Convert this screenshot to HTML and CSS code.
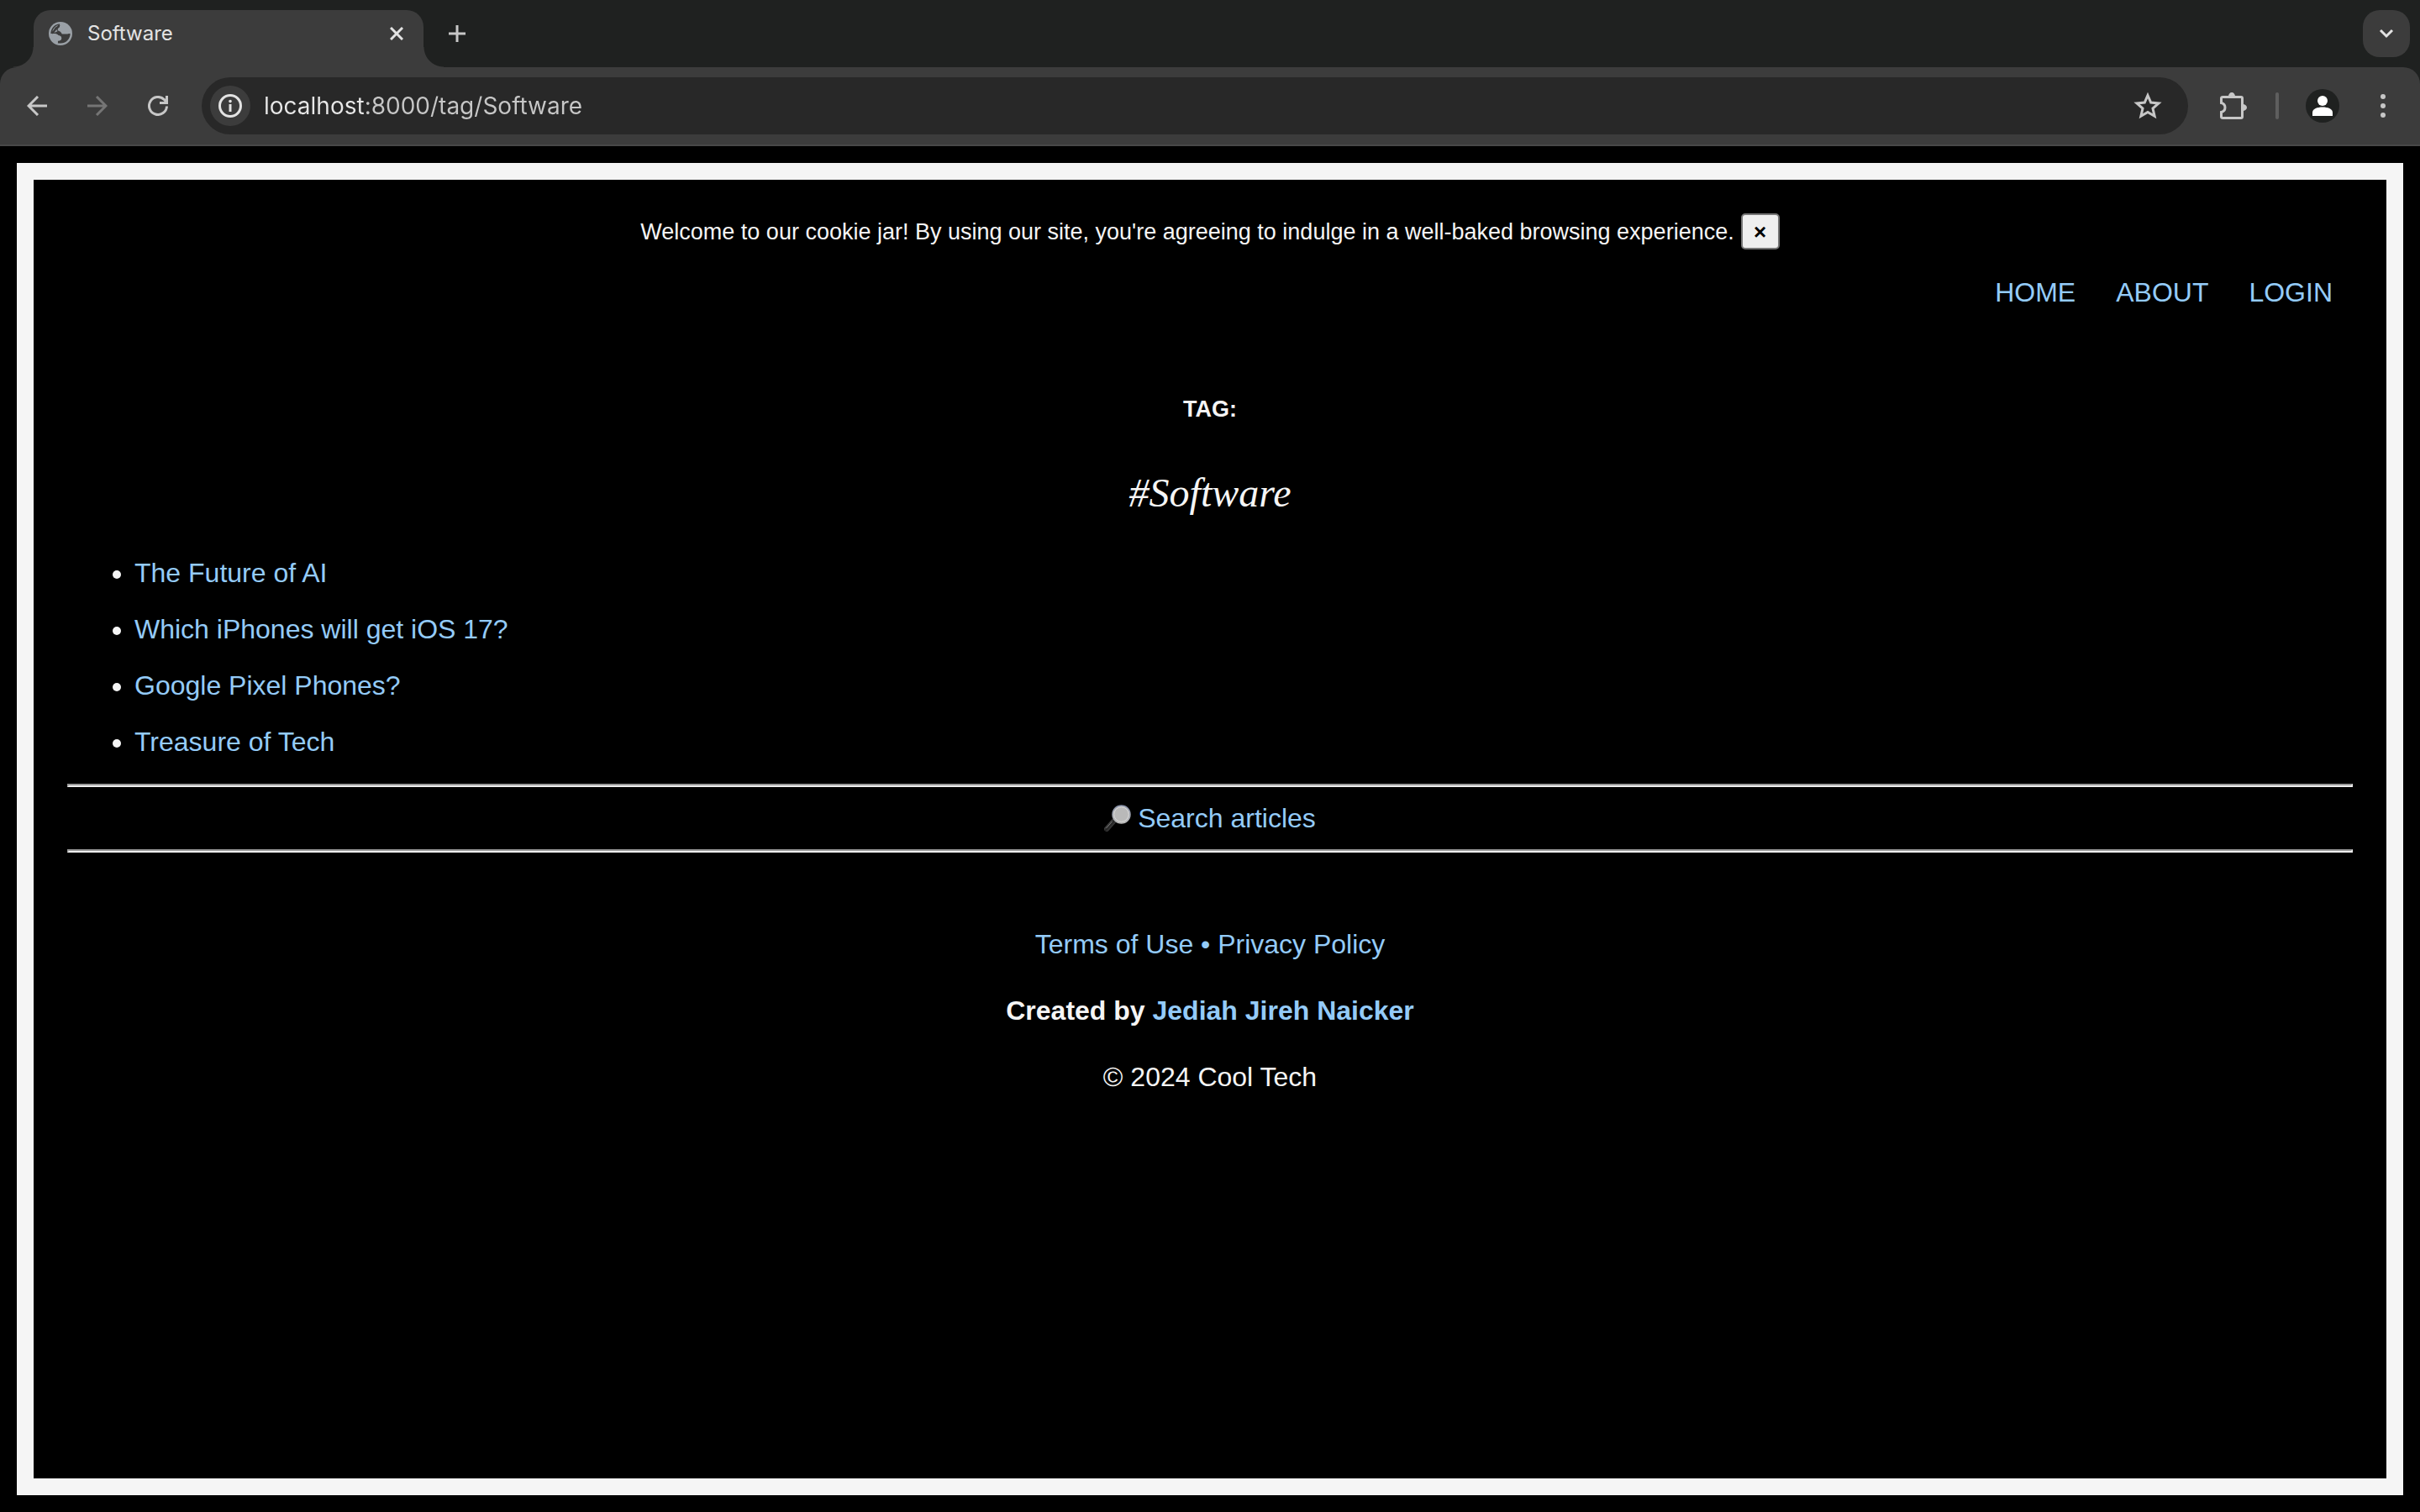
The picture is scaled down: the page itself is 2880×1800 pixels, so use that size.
FILE: index.html
```html
<!DOCTYPE html>
<html lang="en">
<head>
<meta charset="utf-8">
<title>Software</title>
<link rel="stylesheet" href="styles.css">
</head>
<body>
<header class="browser">
  <div class="tabstrip">
    <div class="tab">
      <svg class="favicon" viewBox="0 0 28 28" aria-hidden="true">
        <circle cx="14" cy="14" r="14" fill="#9aa0a6"/>
        <path d="M13 2.400C13.800 5.400 12.600 6.600 10.800 7.600V10.200C13.200 11.200 14.800 12 15.800 14.400H20.600C22.800 14.600 23.600 13.800 25.600 14C25.600 20.600 20.400 25.600 14 25.600H10.800V22.600C13.600 22.600 15.200 21.600 15.200 19.600C15.200 17.600 13.600 16.400 11.600 16.200C10.800 14.800 9 13.900 2.400 14C2.400 7.600 7 2.700 13 2.400Z" fill="#3c3c3c"/>
        <path d="M2.400 14.200C5.400 13.800 9 14 11.400 16.200C14.400 16.400 15.400 18 15.200 19.800C15 21.800 13.400 22.600 10.800 22.600V25.400C5.600 24 2.400 19.600 2.400 14.200Z" fill="#9aa0a6"/>
        <path d="M4 12.600C5 8 8 4.600 12.200 3.400C12.600 5 11.400 6 9.600 7C8.800 9 9.400 10.200 10.600 11L8 12.600Z" fill="#9aa0a6"/>
        <path d="M11.400 3.600C13 5.600 10 6.800 8.600 7.600C7.800 9.800 6.200 11.400 3.600 13.600" fill="none" stroke="#3c3c3c" stroke-width="2.600"/>
      </svg>
      <span class="tab-title">Software</span>
      <button class="icon-button tab-close" aria-label="Close tab">
        <svg width="16" height="16" viewBox="0 0 16 16"><path d="M1 1L15 15M15 1L1 15" stroke="#e3e3e3" stroke-width="3" fill="none"/></svg>
      </button>
    </div>
    <button class="icon-button new-tab" aria-label="New tab">
      <svg width="20" height="20" viewBox="0 0 20 20"><path d="M10 0V20M0 10H20" stroke="#c7c7c7" stroke-width="3" fill="none"/></svg>
    </button>
    <button class="icon-button tab-search" aria-label="Search tabs">
      <svg width="18" height="12" viewBox="0 0 18 12"><path d="M2 2L9 9L16 2" stroke="#e3e3e3" stroke-width="3" fill="none"/></svg>
    </button>
  </div>
  <div class="toolbar">
    <div class="history">
      <button class="icon-button" aria-label="Back"><svg width="24" height="24" viewBox="0 0 24 24"><path d="M24 12H2M13 1L2 12L13 23" stroke="#c7c7c7" stroke-width="3" fill="none"/></svg></button>
      <button class="icon-button" aria-label="Forward" disabled><svg width="24" height="24" viewBox="0 0 24 24"><path d="M0 12H22M11 1L22 12L11 23" stroke="#757575" stroke-width="3" fill="none"/></svg></button>
      <button class="icon-button" aria-label="Reload"><svg width="24" height="24" viewBox="0 0 24 24"><path d="M22.500 12.500A10.500 10.500 0 1 1 19.500 4.600L22 7.500M22.500 0V8.500H14" stroke="#c7c7c7" stroke-width="3" fill="none"/></svg></button>
    </div>
    <div class="omnibox">
      <button class="icon-button site-info" aria-label="View site information">
        <svg width="28" height="28" viewBox="0 0 28 28"><circle cx="14" cy="14" r="12.500" stroke="#e3e3e3" stroke-width="3" fill="none"/><path d="M14 12V21" stroke="#e3e3e3" stroke-width="3"/><circle cx="14" cy="8.600" r="1.800" fill="#e3e3e3"/></svg>
      </button>
      <input class="address" type="text" aria-label="Address" value="localhost:8000/tag/Software">
      <button class="icon-button star" aria-label="Bookmark this page">
        <svg width="34" height="32" viewBox="0 0 34 32"><path d="M17 3.500L20.700 12.100L30 12.900L23 19.100L25.100 28.300L17 23.500L8.900 28.300L11 19.100L4 12.900L13.300 12.100Z" stroke="#c7c7c7" stroke-width="3" fill="none"/></svg>
      </button>
    </div>
    <div class="actions">
      <button class="icon-button" aria-label="Extensions">
        <svg width="32" height="32" viewBox="0 0 32 32"><path d="M3.500 5.500H25Q26.500 5.500 26.500 7V29Q26.500 30.500 25 30.500H3.500Q1.500 30.500 1.500 29V23.500C7.500 22 7.500 14 1.500 12.500V7Q1.500 5.500 3.500 5.500Z" stroke="#c7c7c7" stroke-width="3" fill="none"/><path d="M10 5A4 5 0 0 1 18 5ZM27 14A5 4 0 0 1 27 22Z" fill="#c7c7c7"/></svg>
      </button>
      <span class="separator"></span>
      <button class="icon-button" aria-label="Profile">
        <svg width="40" height="40" viewBox="0 0 40 40"><circle cx="20" cy="20" r="20" fill="#1f2120"/><circle cx="20" cy="14" r="6" fill="#fff"/><path d="M8 32V28C8 23.500 14 21.500 20 21.500S32 23.500 32 28V32Z" fill="#fff"/></svg>
      </button>
      <button class="icon-button" aria-label="Menu">
        <svg width="8" height="28" viewBox="0 0 8 28"><g fill="#c7c7c7"><circle cx="4" cy="3" r="3"/><circle cx="4" cy="14" r="3"/><circle cx="4" cy="25" r="3"/></g></svg>
      </button>
    </div>
  </div>
</header>
<div class="page">
  <div class="cookie">
    <span>Welcome to our cookie jar! By using our site, you're agreeing to indulge in a well-baked browsing experience.</span>
    <button class="dismiss" aria-label="Dismiss">×</button>
  </div>
  <nav class="nav">
    <a href="#home">HOME</a>
    <a href="#about">ABOUT</a>
    <a href="#login">LOGIN</a>
  </nav>
  <main>
    <h5 class="label">TAG:</h5>
    <h1 class="tag">#Software</h1>
    <ul class="articles">
      <li><a href="#ai">The Future of AI</a></li>
      <li><a href="#ios">Which iPhones will get iOS 17?</a></li>
      <li><a href="#pixel">Google Pixel Phones?</a></li>
      <li><a href="#treasure">Treasure of Tech</a></li>
    </ul>
  </main>
  <hr class="rule">
  <a class="search" href="#search">
    <svg width="32" height="32" viewBox="0 0 32 32" aria-hidden="true">
      <defs>
        <linearGradient id="rim" x1="0" y1="0" x2="0" y2="1"><stop offset="0" stop-color="#8790a8"/><stop offset="1" stop-color="#b8b8b8"/></linearGradient>
        <linearGradient id="grip" x1="0" y1="0" x2="1" y2="1"><stop offset="0" stop-color="#666"/><stop offset=".5" stop-color="#222"/><stop offset="1" stop-color="#555"/></linearGradient>
      </defs>
      <path d="M14 17L10 21" stroke="#999" stroke-width="2"/>
      <path d="M11 20L3 29" stroke="url(#grip)" stroke-width="6" stroke-linecap="round"/>
      <path d="M9.500 20L2.500 28" stroke="#777" stroke-width="1"/>
      <circle cx="20.500" cy="11.500" r="10.500" fill="#bdbdbd" stroke="url(#rim)" stroke-width="1.500"/>
      <circle cx="20.500" cy="11.500" r="8.800" fill="#b9b9b9" stroke="#d8d8d8" stroke-width="1"/>
    </svg>
    <span>Search articles</span>
  </a>
  <hr class="rule">
  <footer class="footer">
    <p><a href="#terms">Terms of Use</a><a href="#privacy"> • Privacy Policy</a></p>
    <p class="author">Created by <a href="#author">Jediah Jireh Naicker</a></p>
    <p>© 2024 Cool Tech</p>
  </footer>
</div>
</body>
</html>
```
FILE: styles.css
```css
* { box-sizing: border-box; }

body {
  margin: 0;
  min-height: 100vh;
  display: flex;
  flex-direction: column;
  background: #000;
  color: #f5f5f5;
  font: 32px/38px "Liberation Sans", Arial, sans-serif;
}

a { color: #94cbf8; text-decoration: none; }
svg { display: block; flex: none; }

/* Browser chrome */
.browser { background: #1f2120; font-family: Inter, sans-serif; }

.icon-button {
  display: flex;
  align-items: center;
  justify-content: center;
  padding: 0;
  border: 0;
  background: none;
}

.tabstrip {
  display: flex;
  align-items: center;
  height: 80px;
  padding: 0 12px 0 40px;
}

.tab {
  position: relative;
  display: flex;
  align-items: center;
  width: 464px;
  height: 68px;
  margin-top: 12px;
  padding: 0 24px 12px 18px;
  border-radius: 20px 20px 0 0;
  background: #3c3c3c;
}

.tab::before,
.tab::after {
  content: "";
  position: absolute;
  bottom: 0;
  width: 24px;
  height: 24px;
}
.tab::before { right: 100%; background: radial-gradient(circle at 0 0, transparent 23px, #3c3c3c 24px); }
.tab::after { left: 100%; background: radial-gradient(circle at 100% 0, transparent 23px, #3c3c3c 24px); }

.favicon { width: 28px; height: 28px; }
.tab-title { flex: 1; margin-left: 18px; color: #e3e3e3; font-size: 24px; line-height: 32px; }
.new-tab { margin-left: 30px; }
.tab-search {
  width: 56px;
  height: 56px;
  margin-left: auto;
  border-radius: 20px;
  background: #3c3c3c;
}

.toolbar {
  display: flex;
  align-items: center;
  height: 94px;
  padding: 0 40px 0 32px;
  border-bottom: 2px solid #484848;
  border-radius: 20px 20px 0 0;
  background: #3c3c3c;
}

.history { display: flex; gap: 48px; margin-right: 40px; }

.omnibox {
  flex: 1;
  display: flex;
  align-items: center;
  height: 68px;
  padding: 0 31px 0 10px;
  border-radius: 34px;
  background: #282828;
}

.site-info { width: 48px; height: 48px; border-radius: 50%; background: #3c3c3c; }

.address {
  flex: 1;
  margin: 0 16px;
  padding: 0;
  border: 0;
  outline: 0;
  background: linear-gradient(90deg, #e8e8e8 120px, #c7c7c7 120px);
  background-clip: text;
  -webkit-background-clip: text;
  color: transparent;
  font: 28px/40px Inter, sans-serif;
}

.actions { display: flex; align-items: center; gap: 32px; margin-left: 38px; }
.separator { width: 4px; height: 32px; margin-left: 2px; border-radius: 2px; background: #5e5e5e; }
.actions .icon-button:last-child { margin-left: 16px; }

/* Page */
.page {
  flex: 1;
  margin: 20px;
  padding: 40px;
  border: 20px solid #f5f5f5;
}

.cookie {
  display: flex;
  align-items: center;
  justify-content: center;
  gap: 8px;
  font-size: 27px;
}

.dismiss {
  width: 46px;
  height: 43px;
  padding: 0;
  border: 2px solid #767676;
  border-radius: 5px;
  background: #efefef;
  color: #000;
  font: bold 26px/32px "Liberation Sans", Arial, sans-serif;
}

.nav { display: flex; justify-content: flex-end; gap: 48px; margin: 32px 24px 0; }

.label { margin: 104px 0 0; font-size: 27px; line-height: 32px; text-align: center; }

.tag {
  margin: 52px 0 0;
  font: italic 48px/64px "Apple Chancery", "Liberation Serif", cursive;
  text-align: center;
}

.articles {
  display: grid;
  gap: 29px;
  margin: 44px 0 31px;
  padding: 0 0 0 80px;
}

.rule { margin: 0; border: 2px solid; border-color: #9a9a9a #eee #eee #9a9a9a; }

.search { display: flex; align-items: center; justify-content: center; gap: 8px; margin: 18px 0; }

.footer { margin-top: 90px; text-align: center; }
.footer p { margin: 0 0 41px; }
.author { font-weight: bold; }
```
